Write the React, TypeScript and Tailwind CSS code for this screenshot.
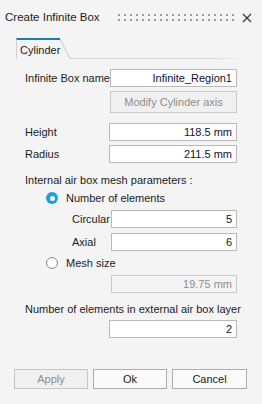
import React from "react";

function Field({ value, disabled, w = "w-[127px]" }: { value: string; disabled?: boolean; w?: string }) {
  return (
    <div className={`${w} h-[18px] flex items-center justify-end pr-[4px] border ${disabled ? "border-[#c9c9c9] bg-[#f4f4f4] text-[#8d8d8d]" : "border-[#b9b9b9] bg-white text-[#10102a]"}`}>
      {value}
    </div>
  );
}

function Radio({ on, label }: { on?: boolean; label: string }) {
  return (
    <div className="flex items-center h-[14px] pl-[46px]">
      {on ? (
        <span className="w-[12px] h-[12px] rounded-full bg-[#1aa0e0] flex items-center justify-center">
          <span className="w-[5px] h-[5px] rounded-full bg-white" />
        </span>
      ) : (
        <span className="w-[12px] h-[12px] rounded-full border border-[#8a8a8a] bg-white" />
      )}
      <span className="ml-[8px]">{label}</span>
    </div>
  );
}

export default function App() {
  return (
    <div className="w-[262px] h-[404px] bg-[#f4f4f4] text-[11px] leading-none text-[#1b1b1b] overflow-hidden whitespace-nowrap" style={{ fontFamily: '"Liberation Sans", Arial, sans-serif' }}>
      <div className="h-[36px] flex items-center pl-[5px] pr-[10px]">
        <span className="w-[113px] text-[11.5px] text-[#1b1b1b]">Create Infinite Box</span>
        <svg width="116" height="8" viewBox="0 0 116 8">
          {Array.from({ length: 20 }).map((_, i) => (
            <g key={i} fill="#9a9a9a">
              <rect x={i * 6} y="0" width="2" height="2" />
              <rect x={i * 6} y="5" width="2" height="2" />
            </g>
          ))}
        </svg>
        <svg className="ml-auto" width="10" height="10" viewBox="0 0 10 10">
          <path d="M1 1L9 9M9 1L1 9" stroke="#333" strokeWidth="1.1" />
        </svg>
      </div>
      <div className="mt-[2px] flex h-[21px] pl-[16px]">
        <div className="w-[44px] border-l border-[#d0d0d0] border-t-2 border-t-[#1a7ea8] flex items-center pl-[3px] pt-[1px]">Cylinder</div>
        <svg width="11" height="21" viewBox="0 0 11 21">
          <path d="M0 1L10 20.5L11 20.5" stroke="#c8c8c8" fill="none" />
        </svg>
        <div className="w-[175px] border-b border-[#dcdcdc]" style={{ borderImage: "linear-gradient(to right, #d6d6d6, #d6d6d6 80%, #f4f4f4) 1" }} />
      </div>
      <div className="pl-[25px]">
        <div className="mt-[10px] flex items-center">
          <span className="w-[85px]">Infinite Box name</span>
          <Field value="Infinite_Region1" />
        </div>
        <div className="mt-[4px] ml-[85px] w-[127px] h-[22px] border border-[#c9c9c9] bg-[#f0f0f0] flex items-center justify-center text-[#8d8d8d]">
          Modify Cylinder axis
        </div>
        <div className="mt-[10px] flex items-center">
          <span className="w-[84px]">Height</span>
          <Field value="118.5 mm" w="w-[128px]" />
        </div>
        <div className="mt-[4px] flex items-center">
          <span className="w-[84px]">Radius</span>
          <Field value="211.5 mm" w="w-[128px]" />
        </div>
        <div className="mt-[11px] h-[12px] flex items-center">Internal air box mesh parameters :</div>
      </div>
      <div className="mt-[5px]">
        <Radio on label="Number of elements" />
      </div>
      <div className="pl-[72px]">
        <div className="mt-[5px] flex items-center">
          <span className="w-[39px]">Circular</span>
          <Field value="5" w="w-[126px]" />
        </div>
        <div className="mt-[5px] flex items-center">
          <span className="w-[39px]">Axial</span>
          <Field value="6" w="w-[126px]" />
        </div>
      </div>
      <div className="mt-[5px]">
        <Radio label="Mesh size" />
      </div>
      <div className="mt-[5px] pl-[111px]">
        <Field value="19.75 mm" disabled w="w-[126px]" />
      </div>
      <div className="pl-[25px] mt-[10px] h-[12px] flex items-center">Number of elements in external air box layer</div>
      <div className="mt-[5px] pl-[109px]">
        <Field value="2" w="w-[128px]" />
      </div>
      <div className="mt-[31px] pl-[14px] flex gap-[5px]">
        <div className="w-[74px] h-[20px] border border-[#c6c6c6] bg-[#f0f0f0] text-[#8d8d8d] flex items-center justify-center">Apply</div>
        <div className="w-[74px] h-[20px] border border-[#adadad] bg-[#fafafa] flex items-center justify-center">Ok</div>
        <div className="w-[75px] h-[20px] border border-[#adadad] bg-[#fafafa] flex items-center justify-center">Cancel</div>
      </div>
    </div>
  );
}
